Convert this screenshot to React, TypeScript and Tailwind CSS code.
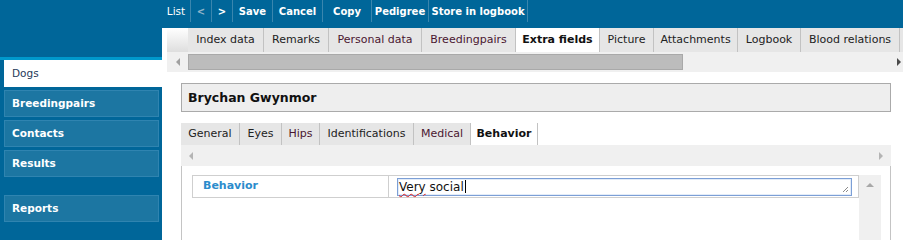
const toolbar = [
  { label: 'List', w: 'w-[29px]', bold: false },
  { label: '<', w: 'w-[21px]', bold: true, disabled: true },
  { label: '>', w: 'w-[21px]', bold: true },
  { label: 'Save', w: 'w-[40px]', bold: true },
  { label: 'Cancel', w: 'w-[50px]', bold: true },
  { label: 'Copy', w: 'w-[49px]', bold: true },
  { label: 'Pedigree', w: 'w-[57px]', bold: true },
  { label: 'Store in logbook', w: 'w-[99px]', bold: true }
]

const tabs = [
  { label: 'Index data', w: 'w-[76px]' },
  { label: 'Remarks', w: 'w-[65px]' },
  { label: 'Personal data', w: 'w-[93px]', filled: true },
  { label: 'Breedingpairs', w: 'w-[94px]', filled: true },
  { label: 'Extra fields', w: 'w-[84px]', active: true },
  { label: 'Picture', w: 'w-[54px]' },
  { label: 'Attachments', w: 'w-[84px]' },
  { label: 'Logbook', w: 'w-[63px]' },
  { label: 'Blood relations', w: 'w-[99px]' }
]

const subTabs = [
  { label: 'General', w: 'w-[59px]' },
  { label: 'Eyes', w: 'w-[42px]' },
  { label: 'Hips', w: 'w-[38px]', filled: true },
  { label: 'Identifications', w: 'w-[94px]' },
  { label: 'Medical', w: 'w-[57px]', filled: true },
  { label: 'Behavior', w: 'w-[67px]', active: true }
]

const menu = ['Breedingpairs', 'Contacts', 'Results']

function Arrow({ dir, color }: { dir: 'left' | 'right' | 'up'; color: string }) {
  const points =
    dir === 'left' ? '4,0 4,8 0,4' : dir === 'right' ? '0,0 4,4 0,8' : '0,4 4,0 8,4'
  const size = dir === 'up' ? { width: 8, height: 4 } : { width: 4, height: 8 }
  return (
    <svg {...size} viewBox={`0 0 ${size.width} ${size.height}`} className="shrink-0">
      <polygon points={points} fill={color} />
    </svg>
  )
}

function TabStrip({
  items,
  height
}: {
  items: { label: string; w: string; active?: boolean; filled?: boolean }[]
  height: string
}) {
  return (
    <>
      {items.map((t) => (
        <div
          key={t.label}
          className={`${t.w} ${height} shrink-0 flex items-center justify-center border-r border-[#c2c2c2] pt-[1px] text-[11px] ${
            t.active
              ? 'bg-white font-bold text-[#111]'
              : t.filled
                ? 'bg-[#e6e6e6] text-[#4a1630]'
                : 'bg-[#e6e6e6] text-[#222]'
          }`}
        >
          {t.label}
        </div>
      ))}
    </>
  )
}

export default function App() {
  return (
    <div className="flex h-[240px] w-[903px] overflow-hidden bg-[#006699] font-['DejaVu_Sans',Verdana,sans-serif]">
      {/* sidebar */}
      <aside className="flex w-[162px] shrink-0 flex-col">
        <div className="h-[57px]" />
        <div className="h-[3px] bg-[#0099cc]" />
        <div className="ml-[4px] flex h-[27px] items-center bg-white pl-[8px] text-[10.5px] text-[#1f3a5a]">
          Dogs
        </div>
        <nav className="ml-[4px] mr-[3px] mt-[3px] flex flex-col gap-[3px]">
          {menu.map((m) => (
            <div
              key={m}
              className="flex h-[27px] items-center border border-[#2f84b0] bg-[#1c76a2] pl-[7px] pt-[1px] text-[10.5px] font-bold text-white"
            >
              {m}
            </div>
          ))}
          <div className="mt-[15px] flex h-[27px] items-center border border-[#2f84b0] bg-[#1c76a2] pl-[7px] pt-[1px] text-[10.5px] font-bold text-white">
            Reports
          </div>
        </nav>
      </aside>

      <div className="flex min-w-0 flex-1 flex-col">
        {/* toolbar */}
        <div className="flex h-[28px] shrink-0 items-start text-[10px] text-white">
          {toolbar.map((t) => (
            <div
              key={t.label}
              className={`${t.w} flex h-[22px] shrink-0 items-center justify-center whitespace-nowrap border-r border-[#3a86ae] pt-[1px] ${
                t.bold ? 'font-bold' : 'text-[10.5px]'
              } ${t.disabled ? 'text-[#8fb3c8]' : ''}`}
            >
              {t.label}
            </div>
          ))}
        </div>

        {/* main */}
        <div className="flex min-h-0 flex-1 flex-col bg-white pl-[5px]">
          <div className="flex h-[24px] shrink-0 overflow-hidden">
            <div className="h-[24px] w-[21px] shrink-0 bg-gradient-to-b from-white to-[#dedede]" />
            <TabStrip items={tabs} height="h-[24px]" />
            <div className="h-[24px] flex-1 bg-[#e6e6e6]" />
          </div>
          <div className="flex h-[20px] shrink-0 items-center bg-[#f0f0f0]">
            <div className="flex w-[21px] shrink-0 justify-center">
              <Arrow dir="left" color="#a0a0a0" />
            </div>
            <div className="h-[16px] w-[495px] border border-[#a9a9a9] bg-[#bcbcbc]" />
            <div className="flex flex-1 justify-end pr-[2px]">
              <Arrow dir="right" color="#4a4a4a" />
            </div>
          </div>

          <div className="ml-[14px] mt-[11px] flex h-[29px] w-[710px] shrink-0 items-center border border-[#aaaaaa] bg-[#eeeeee] pl-[6px] pt-[1px] text-[12.5px] font-bold text-[#111]">
            Brychan Gwynmor
          </div>

          <div className="ml-[14px] mt-[11px] flex w-[710px] min-h-0 flex-1 flex-col">
            <div className="flex h-[22px] shrink-0">
              <TabStrip items={subTabs} height="h-[22px]" />
            </div>
            <div className="flex h-[21px] shrink-0 items-center justify-between bg-[#f0f0f0] px-[8px]">
              <Arrow dir="left" color="#b4b4b4" />
              <Arrow dir="right" color="#b4b4b4" />
            </div>
            <div className="flex flex-1 border-x border-[#c4c4c4] pl-[10px] pt-[9px]">
              <div className="flex h-[23px] w-[667px] shrink-0 border border-[#cfcfcf]">
                <div className="flex w-[196px] shrink-0 items-center border-r border-[#cfcfcf] pl-[10px] text-[11px] font-bold text-[#2b8ccc]">
                  Behavior
                </div>
                <div className="flex flex-1 items-center pl-[8px]">
                  <div className="relative flex h-[18px] w-[455px] items-center border border-[#7c9fd6] bg-white pl-[1px] text-[12px] text-[#111] shadow-[inset_0_0_0_1px_#e3ecf8]">
                    <span className="underline decoration-[#e02020] decoration-wavy decoration-[1px] underline-offset-[2px]">
                      Very
                    </span>
                    <span>&nbsp;social</span>
                    <span className="ml-[1px] h-[13px] w-[1px] bg-black" />
                    <svg
                      width="7"
                      height="7"
                      viewBox="0 0 7 7"
                      className="absolute bottom-[2px] right-[2px]"
                    >
                      <path d="M6 1 L1 6 M6 4 L4 6" stroke="#8a8a8a" strokeWidth="1" />
                    </svg>
                  </div>
                </div>
              </div>
              <div className="flex w-[22px] shrink-0 justify-center bg-[#f0f0f0] pt-[8px]">
                <Arrow dir="up" color="#a8a8a8" />
              </div>
            </div>
          </div>
        </div>
      </div>
    </div>
  )
}
